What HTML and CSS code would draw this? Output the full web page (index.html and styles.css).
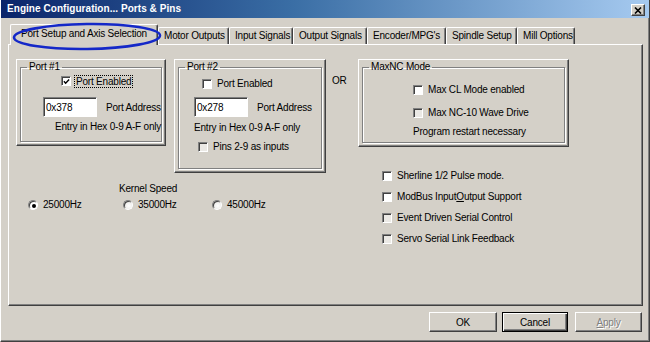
FILE: index.html
```html
<!DOCTYPE html>
<html lang="en">
  <head>
    <meta charset="utf-8">
    <title>Engine Configuration... Ports &amp; Pins</title>
    <link rel="stylesheet" href="styles.css">
  </head>
  <body>
    <div class="window">
      <div class="titlebar">
        <span class="title">Engine Configuration... Ports &amp; Pins</span>
        <span class="close-btn">
          <svg width="8" height="7" viewBox="0 0 8 7">
            <path d="M1 0.5 L7 6.5 M7 0.5 L1 6.5" stroke="#000" stroke-width="1.6" fill="none"/>
          </svg>
        </span>
      </div>

      <div class="tabs">
        <div class="tab tab-active">Port Setup and Axis Selection</div>
        <div class="tab tab-motor">Motor Outputs</div>
        <div class="tab tab-input">Input Signals</div>
        <div class="tab tab-output">Output Signals</div>
        <div class="tab tab-encoder">Encoder/MPG's</div>
        <div class="tab tab-spindle">Spindle Setup</div>
        <div class="tab tab-mill">Mill Options</div>
        <svg class="annotation" width="152" height="31" viewBox="0 0 152 31">
          <ellipse cx="76" cy="15.5" rx="73" ry="12.5" transform="rotate(-0.8 76 15.5)" fill="none" stroke="#1428c8" stroke-width="2.6"/>
        </svg>
      </div>

      <div class="panel">
        <div class="panel-left">
          <div class="ports">
            <div class="frame frame-port1">
              <fieldset class="group">
                <legend>Port #1</legend>
                <label class="check port1-enabled">
                  <span class="box">
                    <svg width="8" height="8" viewBox="0 0 8 8">
                      <path d="M1 3.2 L3 5.4 L7 1.2" stroke="#000" stroke-width="1.6" fill="none"/>
                    </svg>
                  </span>
                  <span class="focus">Port Enabled</span>
                </label>
                <div class="addr port1-addr">
                  <input class="edit" type="text" value="0x378">
                  <span>Port Address</span>
                </div>
                <div class="note port1-note">Entry in Hex 0-9 A-F only</div>
              </fieldset>
            </div>

            <div class="frame frame-port2">
              <fieldset class="group">
                <legend>Port #2</legend>
                <label class="check port2-enabled">
                  <span class="box"></span>
                  <span>Port Enabled</span>
                </label>
                <div class="addr port2-addr">
                  <input class="edit" type="text" value="0x278">
                  <span>Port Address</span>
                </div>
                <div class="note port2-note">Entry in Hex 0-9 A-F only</div>
                <label class="check port2-pins">
                  <span class="box box-dim"></span>
                  <span>Pins 2-9 as inputs</span>
                </label>
              </fieldset>
            </div>
          </div>

          <div class="speed">
            <div class="speed-label">Kernel Speed</div>
            <div class="radios">
              <label class="check"><span class="radio radio-on"></span>25000Hz</label>
              <label class="check"><span class="radio radio-dim"></span>35000Hz</label>
              <label class="check"><span class="radio radio-dim"></span>45000Hz</label>
            </div>
          </div>
        </div>

        <div class="panel-right">
          <div class="maxnc-row">
            <div class="or">OR</div>
            <div class="frame frame-maxnc">
              <fieldset class="group">
                <legend>MaxNC Mode</legend>
                <label class="check maxcl">
                  <span class="box"></span>
                  <span>Max CL Mode enabled</span>
                </label>
                <label class="check maxnc10">
                  <span class="box box-dim"></span>
                  <span>Max NC-10 Wave Drive</span>
                </label>
                <div class="note maxnc-note">Program restart necessary</div>
              </fieldset>
            </div>
          </div>

          <div class="options">
            <label class="check"><span class="box"></span><span>Sherline 1/2 Pulse mode.</span></label>
            <label class="check"><span class="box"></span><span>ModBus Input<u>O</u>utput Support</span></label>
            <label class="check"><span class="box box-dim"></span><span>Event Driven Serial Control</span></label>
            <label class="check"><span class="box box-dim"></span><span>Servo Serial Link Feedback</span></label>
          </div>
        </div>
      </div>

      <div class="buttons">
        <div class="btn btn-ok">OK</div>
        <div class="btn btn-default btn-cancel">Cancel</div>
        <div class="btn btn-disabled btn-apply"><span><u>A</u>pply</span></div>
      </div>
    </div>
  </body>
</html>
```

FILE: styles.css
```css
body {
  margin: 0;
  font-family: "Liberation Sans", Arial, sans-serif;
  font-size: 10px;
  letter-spacing: -0.2px;
  color: #000;
  background: #d4d0c8;
}

.window {
  width: 650px;
  height: 342px;
  box-sizing: border-box;
  display: flex;
  flex-flow: column;
  background: #d4d0c8;
  border-left: 1px solid #fff;
  border-right: 1px solid #404040;
  border-bottom: 1px solid #404040;
  box-shadow: inset -1px -1px #808080;
}

/* title bar */
.titlebar {
  height: 18px;
  flex: none;
  display: flex;
  justify-content: space-between;
  align-items: flex-start;
  padding: 0 4px 0 6px;
  background: linear-gradient(to right, #0a246a, #3a6ea5 45%, #a6caf0);
  color: #fff;
  font-weight: bold;
  letter-spacing: 0.05px;
}
.title {
  line-height: 18px;
}
.close-btn {
  width: 14px;
  height: 12px;
  margin-top: 4px;
  box-sizing: border-box;
  display: flex;
  justify-content: center;
  align-items: center;
  background: #d4d0c8;
  border: 1px solid;
  border-color: #fff #404040 #404040 #fff;
  box-shadow: inset -1px -1px #808080;
}

/* tabs */
.tabs {
  position: relative;
  height: 26px;
  flex: none;
  display: flex;
  align-items: flex-end;
  margin-left: 9px;
}
.tab {
  height: 17px;
  box-sizing: border-box;
  padding: 2px 0 0 5px;
  line-height: 12px;
  white-space: nowrap;
  border-top: 1px solid #fff;
  border-left: 1px solid #fff;
  border-right: 1px solid #404040;
  box-shadow: inset -1px 0 #808080;
  border-radius: 2px 2px 0 0;
}
.tab-active {
  position: relative;
  z-index: 1;
  width: 148px;
  height: 21px;
  margin-bottom: -1px;
  padding: 3px 0 0 10px;
  background: #d4d0c8;
}
.tab-motor { width: 71px; }
.tab-input { width: 64px; }
.tab-output { width: 74px; }
.tab-encoder { width: 79px; }
.tab-spindle { width: 71px; }
.tab-mill { width: 58px; }

.annotation {
  position: absolute;
  left: 1px;
  top: 3px;
  z-index: 2;
  overflow: visible;
}

/* main panel */
.panel {
  height: 262px;
  flex: none;
  box-sizing: border-box;
  display: flex;
  margin: 0 6px 0 7px;
  padding: 14px 0 0 7px;
  border: 1px solid;
  border-color: #fff #404040 #404040 #fff;
  box-shadow: inset -1px -1px #808080;
}
.panel-left {
  width: 310px;
}
.panel-right {
  margin-left: 5px;
}

.ports {
  display: flex;
  align-items: flex-start;
  gap: 8px;
}

.frame {
  box-sizing: border-box;
  display: flex;
  padding: 2px 3px 3px 3px;
  border: 1px solid;
  border-color: #fff #404040 #404040 #fff;
  box-shadow: inset -1px -1px #808080;
}
.frame-port1 {
  width: 150px;
  height: 87px;
}
.frame-port2 {
  width: 152px;
  height: 114px;
}
.frame-maxnc {
  width: 211px;
  height: 88px;
}

.group {
  flex: 1;
  min-width: 0;
  margin: 0;
  padding: 0;
  border: 1px solid #808080;
  box-shadow: inset 1px 1px #fff, 1px 1px #fff;
}
.group legend {
  margin-left: 6px;
  padding: 0 2px;
  line-height: 10px;
}

.check {
  display: flex;
  align-items: center;
  gap: 5px;
  height: 12px;
  line-height: 12px;
  white-space: nowrap;
}

.box {
  width: 10px;
  height: 10px;
  flex: none;
  box-sizing: border-box;
  display: flex;
  justify-content: center;
  align-items: center;
  background: #fff;
  border: 1px solid;
  border-color: #808080 #fff #fff #808080;
  box-shadow: inset 1px 1px #404040;
}
.box svg {
  margin: 1px 0 0 1px;
}
.box-dim {
  background: #ebe9e5;
}

.radio {
  width: 10px;
  height: 10px;
  flex: none;
  box-sizing: border-box;
  display: flex;
  justify-content: center;
  align-items: center;
  border-radius: 50%;
  background: #fff;
  border: 1px solid;
  border-color: #808080 #fff #fff #808080;
  box-shadow: inset 1px 1px #404040;
}
.radio-on::after {
  content: "";
  width: 4px;
  height: 4px;
  border-radius: 50%;
  background: #000;
  margin: 1px 0 0 1px;
}
.radio-dim {
  background: radial-gradient(circle at 60% 60%, #fff, #e0ded9);
}

.focus {
  outline: 1px dotted #000;
  padding: 0 1px;
  line-height: 11px;
  margin-left: -1px;
}

.addr {
  display: flex;
  align-items: center;
  gap: 9px;
  white-space: nowrap;
}
.edit {
  width: 54px;
  height: 20px;
  box-sizing: border-box;
  margin: 0;
  padding: 0 2px;
  font: inherit;
  letter-spacing: inherit;
  color: #000;
  background: #fff;
  border: 1px solid;
  border-color: #808080 #fff #fff #808080;
  box-shadow: inset 1px 1px #404040;
  outline: none;
}

.note {
  line-height: 12px;
  white-space: nowrap;
}

/* port #1 */
.port1-enabled { margin: 3px 0 0 40px; }
.port1-addr { margin: 10px 0 0 22px; }
.port1-note { margin: 4px 0 0 34px; }

/* port #2 */
.port2-enabled { margin: 6px 0 0 23px; }
.port2-addr { margin: 7px 0 0 15px; }
.port2-note { margin: 5px 0 0 15px; }
.port2-pins { margin: 7px 0 0 19px; }

/* kernel speed */
.speed {
  margin-top: 10px;
}
.speed-label {
  margin-left: 103px;
  line-height: 12px;
}
.radios {
  display: grid;
  grid-template-columns: 95px 89px auto;
  margin: 4px 0 0 12px;
}

/* right side */
.maxnc-row {
  display: flex;
  align-items: flex-start;
}
.or {
  width: 26px;
  padding: 16px 0 0 1px;
  line-height: 12px;
}
.maxcl { margin: 12px 0 0 50px; }
.maxnc10 { margin: 11px 0 0 50px; }
.maxnc-note { margin: 7px 0 0 50px; }

.options {
  display: flex;
  flex-flow: column;
  gap: 9px;
  margin: 23px 0 0 51px;
}

/* dialog buttons */
.buttons {
  display: flex;
  justify-content: flex-end;
  margin: 6px 7px 0 0;
}
.btn {
  height: 20px;
  box-sizing: border-box;
  display: flex;
  justify-content: center;
  align-items: center;
  background: #d4d0c8;
  border: 1px solid;
  border-color: #fff #404040 #404040 #fff;
  box-shadow: inset -1px -1px #808080;
}
.btn-ok {
  width: 68px;
  margin-right: 5px;
}
.btn-cancel {
  width: 66px;
  margin-right: 7px;
}
.btn-apply {
  width: 67px;
}
.btn-default {
  border: 1px solid #000;
  box-shadow: inset 1px 1px #fff, inset -1px -1px #404040, inset -2px -2px #808080;
}
.btn-disabled {
  color: #808080;
  text-shadow: 1px 1px #fff;
}
```
